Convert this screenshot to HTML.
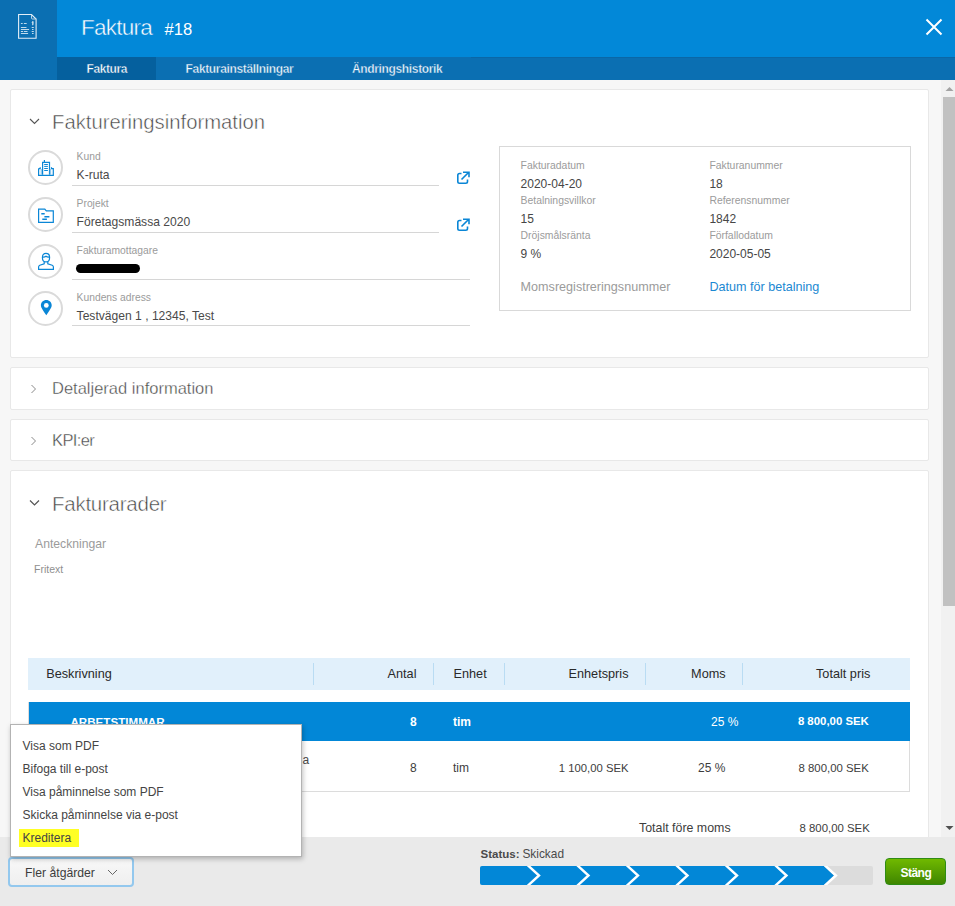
<!DOCTYPE html>
<html><head><meta charset="utf-8"><style>
*{margin:0;padding:0;box-sizing:border-box}
html,body{width:955px;height:906px;overflow:hidden;background:#f7f7f7;font-family:"Liberation Sans", sans-serif}
.a{position:absolute}
.t{position:absolute;line-height:1;white-space:nowrap}
.panel{position:absolute;left:10px;width:919px;background:#fff;border:1px solid #e8e8e8;border-radius:2px}
.circ{position:absolute;left:28px;width:35px;height:35px;border:2px solid #dadada;border-radius:50%;background:#fff}
.circ svg{position:absolute;left:-2px;top:-2px}
.ul{position:absolute;left:72px;height:1px;background:#d6d6d6}
</style></head><body>
<div class="a" style="left:0;top:0;width:57px;height:80px;background:#0b6fb2"></div>
<div class="a" style="left:57px;top:0;width:898px;height:57px;background:#0288d8"></div>
<div class="a" style="left:57px;top:57px;width:898px;height:23px;background:#0b6fb2"></div>
<div class="a" style="left:471px;top:57px;width:484px;height:1px;background:#0a67a6"></div>
<div class="a" style="left:57px;top:57px;width:99px;height:23px;background:#05609e"></div>
<svg class="a" style="left:10px;top:8px" width="36" height="36" viewBox="10 8 36 36">
<path d="M18.6 14.5 H31.5 L36.1 19 V38.3 H18.6 Z" fill="none" stroke="#e3eef7" stroke-width="1.1"/>
<path d="M31.5 14.8 V18 Q31.5 19 32.5 19 H35.8" fill="none" stroke="#b9d5ea" stroke-width="1"/>
<g stroke="#d5e6f3" stroke-width="0.9" fill="none">
<path d="M20.9 23.5h1.8M23.9 23.5h2.8M20.9 27.5h5.6M20.9 29.5h8.2M20.9 31.5h2.2M23.9 31.5h3.6M20.9 33.5h7.2M31.7 27.5h2.1M32 29.5h1.5M31.7 31.5h2.1M32 33.5h1.6"/>
<path d="M32.8 21.2v4M33.6 22.2c-1.2-0.6-1.9 0.1-1.1 0.8s1.2 1 0 1.7" stroke-width="1"/>
</g></svg>
<svg class="a" style="left:925px;top:18px" width="18" height="18" viewBox="0 0 18 18"><path d="M1.5 1.5L16.5 16.5M16.5 1.5L1.5 16.5" stroke="#fff" stroke-width="2"/></svg>
<div class="t" style="top:16.75px;font-size:22.5px;color:#fff;font-weight:300;letter-spacing:-0.75px;left:81px;-webkit-text-stroke:0.45px #0288d8;">Faktura</div>
<div class="t" style="top:21.85px;font-size:16.6px;color:#fff;left:164.5px;">#18</div>
<div class="t" style="top:62.84px;font-size:12px;color:#fff;font-weight:700;letter-spacing:-0.4px;left:86.5px;-webkit-text-stroke:0.35px #05609e;">Faktura</div>
<div class="t" style="top:62.84px;font-size:12px;color:#f2f8fc;font-weight:700;letter-spacing:-0.35px;left:185.6px;-webkit-text-stroke:0.35px #0b6fb2;">Fakturainställningar</div>
<div class="t" style="top:62.84px;font-size:12px;color:#f2f8fc;font-weight:700;letter-spacing:-0.35px;left:352px;-webkit-text-stroke:0.35px #0b6fb2;">Ändringshistorik</div>
<div class="a" style="left:941px;top:80px;width:14px;height:757px;background:#f1f1f1"></div>
<div class="a" style="left:943px;top:97px;width:12px;height:509px;background:#c1c1c1"></div>
<svg class="a" style="left:945px;top:86px" width="9" height="6"><path d="M0.5 5L4.5 1L8.5 5Z" fill="#a3a3a3"/></svg>
<svg class="a" style="left:945px;top:825px" width="9" height="6"><path d="M0.5 1L4.5 5L8.5 1Z" fill="#505050"/></svg>
<div class="panel" style="top:89px;height:269px"></div>
<svg class="a" style="left:29px;top:118px" width="11" height="8"><path d="M1 1L5.5 5.5L10 1" fill="none" stroke="#555" stroke-width="1.1"/></svg>
<div class="t" style="top:112.42px;font-size:20.3px;color:#444;left:52px;-webkit-text-stroke:0.5px #fff;">Faktureringsinformation</div>
<div class="circ" style="top:150px"><svg width="35" height="35" viewBox="0 0 35 35"><g fill="none" stroke="#0a86d6" stroke-width="1.2">
 <path d="M10.6 18.6V25.3H25.3V18.6H23.5V17.3M10.6 18.6H12.2V17.3"/><path d="M14.6 24.8V12.4H21.5V24.8"/><path d="M16.4 10V12.4"/>
 <path d="M16.2 14.5h3.7M16.2 16.4h3.7M16.2 18.5h3.7M16.2 20.5h3.7" stroke-width="1"/></g>
 <path d="M13.3 19V25M22.5 19V25" stroke="#8fc8ee" stroke-width="1.3"/></svg></div>
<div class="circ" style="top:197px"><svg width="35" height="35" viewBox="0 0 35 35"><g fill="none" stroke="#0a86d6" stroke-width="1.2">
 <path d="M10.6 12.2H16.8L18.3 13.9H25.3V25.3H10.6Z"/><path d="M13.3 16.8h3.4M16.4 19.8h5M14.3 22.3h4.6" stroke-width="1.5"/></g></svg></div>
<div class="circ" style="top:244px"><svg width="35" height="35" viewBox="0 0 35 35"><g fill="none" stroke="#0a86d6" stroke-width="1.2">
 <path d="M18 9.3C15.8 9.3 14.4 11 14.4 13.4C14.4 15.8 15.8 17.9 18 17.9C20.2 17.9 21.6 15.8 21.6 13.4C21.6 11 20.2 9.3 18 9.3Z"/>
 <path d="M14.5 13C16 13.3 17.2 12.9 18 12.2C18.8 12.9 20 13.3 21.5 13"/>
 <path d="M16.2 17.5V19.8L11.8 21.3C11 21.7 10.6 22.3 10.6 23V25.3H25.4V23C25.4 22.3 25 21.7 24.2 21.3L19.8 19.8V17.5"/></g></svg></div>
<div class="circ" style="top:291px"><svg width="35" height="35" viewBox="0 0 35 35"><path d="M18.3 9C15.3 9 12.9 11.3 12.9 14.3C12.9 16.6 14.2 18.3 18.3 24.2C22.4 18.3 23.7 16.6 23.7 14.3C23.7 11.3 21.3 9 18.3 9Z" fill="#0a86d6"/><circle cx="18.3" cy="14.4" r="2.4" fill="#fff"/></svg></div>
<div class="t" style="top:152.08px;font-size:10.3px;color:#9b9b9b;left:76.6px;">Kund</div>
<div class="t" style="top:168.76px;font-size:12.1px;color:#4a4a4a;left:76.6px;">K-ruta</div>
<div class="ul" style="top:185px;width:367px"></div>
<div class="t" style="top:199.08px;font-size:10.3px;color:#9b9b9b;left:76.6px;">Projekt</div>
<div class="t" style="top:215.76px;font-size:12.1px;color:#4a4a4a;left:76.6px;">Företagsmässa 2020</div>
<div class="ul" style="top:232px;width:367px"></div>
<div class="t" style="top:246.38px;font-size:10.3px;color:#9b9b9b;left:76.6px;">Fakturamottagare</div>
<div class="ul" style="top:279px;width:398px"></div>
<div class="t" style="top:293.08px;font-size:10.3px;color:#9b9b9b;left:76.6px;">Kundens adress</div>
<div class="t" style="top:309.76px;font-size:12.1px;color:#4a4a4a;left:76.6px;">Testvägen 1 , 12345, Test</div>
<div class="ul" style="top:325px;width:398px"></div>
<div class="a" style="left:76px;top:264px;width:64px;height:9px;border-radius:5px;background:#000"></div>
<svg class="a" style="left:456px;top:170px" width="15" height="15" viewBox="0 0 15 15"><g fill="none" stroke="#0a86d6" stroke-width="1.6">
    <path d="M5.5 3.5H3.5C2.4 3.5 1.8 4.1 1.8 5.2V11.5C1.8 12.6 2.4 13.2 3.5 13.2H9.8C10.9 13.2 11.5 12.6 11.5 11.5V9.5"/>
    <path d="M5.5 9.5L12.5 2.5M7 2.2H13V7.2"/></g></svg>
<svg class="a" style="left:456px;top:217px" width="15" height="15" viewBox="0 0 15 15"><g fill="none" stroke="#0a86d6" stroke-width="1.6">
    <path d="M5.5 3.5H3.5C2.4 3.5 1.8 4.1 1.8 5.2V11.5C1.8 12.6 2.4 13.2 3.5 13.2H9.8C10.9 13.2 11.5 12.6 11.5 11.5V9.5"/>
    <path d="M5.5 9.5L12.5 2.5M7 2.2H13V7.2"/></g></svg>
<div class="a" style="left:499px;top:146px;width:412px;height:165px;border:1px solid #d9d9d9;background:#fff"></div>
<div class="t" style="top:160.70px;font-size:10.4px;color:#9b9b9b;left:520.6px;">Fakturadatum</div>
<div class="t" style="top:178.24px;font-size:12px;color:#464646;left:520.6px;">2020-04-20</div>
<div class="t" style="top:195.70px;font-size:10.4px;color:#9b9b9b;left:520.6px;">Betalningsvillkor</div>
<div class="t" style="top:213.24px;font-size:12px;color:#464646;left:520.6px;">15</div>
<div class="t" style="top:230.70px;font-size:10.4px;color:#9b9b9b;left:520.6px;">Dröjsmålsränta</div>
<div class="t" style="top:248.24px;font-size:12px;color:#464646;left:520.6px;">9 %</div>
<div class="t" style="top:160.70px;font-size:10.4px;color:#9b9b9b;left:709.4px;">Fakturanummer</div>
<div class="t" style="top:178.24px;font-size:12px;color:#464646;left:709.4px;">18</div>
<div class="t" style="top:195.70px;font-size:10.4px;color:#9b9b9b;left:709.4px;">Referensnummer</div>
<div class="t" style="top:213.24px;font-size:12px;color:#464646;left:709.4px;">1842</div>
<div class="t" style="top:230.70px;font-size:10.4px;color:#9b9b9b;left:709.4px;">Förfallodatum</div>
<div class="t" style="top:248.24px;font-size:12px;color:#464646;left:709.4px;">2020-05-05</div>
<div class="t" style="top:281.33px;font-size:12.6px;color:#9b9b9b;left:520.6px;">Momsregistreringsnummer</div>
<div class="t" style="top:281.33px;font-size:12.6px;color:#1b88d2;left:709.4px;">Datum för betalning</div>
<div class="panel" style="top:367px;height:43px"></div>
<div class="panel" style="top:419px;height:42px"></div>
<svg class="a" style="left:30px;top:384px" width="7" height="10"><path d="M1.5 1L5.5 5L1.5 9" fill="none" stroke="#8a8a8a" stroke-width="1"/></svg>
<svg class="a" style="left:30px;top:436px" width="7" height="10"><path d="M1.5 1L5.5 5L1.5 9" fill="none" stroke="#8a8a8a" stroke-width="1"/></svg>
<div class="t" style="top:380.03px;font-size:16.5px;color:#444;left:52px;-webkit-text-stroke:0.35px #fff;">Detaljerad information</div>
<div class="t" style="top:432.03px;font-size:16.5px;color:#444;letter-spacing:-0.6px;left:52px;-webkit-text-stroke:0.35px #fff;">KPI:er</div>
<div class="panel" style="top:470px;height:500px"></div>
<svg class="a" style="left:29px;top:499px" width="11" height="8"><path d="M1 1.5L5.5 6L10 1.5" fill="none" stroke="#555" stroke-width="1.2"/></svg>
<div class="t" style="top:493.95px;font-size:20.5px;color:#444;letter-spacing:-0.25px;left:52px;-webkit-text-stroke:0.5px #fff;">Fakturarader</div>
<div class="t" style="top:537.67px;font-size:12.2px;color:#9b9b9b;left:35px;">Anteckningar</div>
<div class="t" style="top:564.11px;font-size:10.5px;color:#8f8f8f;left:34px;">Fritext</div>
<div class="a" style="left:28px;top:658px;width:882px;height:32px;background:#e1f0fb"></div>
<div class="a" style="left:313px;top:663px;width:1px;height:22px;background:#b9dcf3"></div>
<div class="a" style="left:433px;top:663px;width:1px;height:22px;background:#b9dcf3"></div>
<div class="a" style="left:504px;top:663px;width:1px;height:22px;background:#b9dcf3"></div>
<div class="a" style="left:645px;top:663px;width:1px;height:22px;background:#b9dcf3"></div>
<div class="a" style="left:742px;top:663px;width:1px;height:22px;background:#b9dcf3"></div>
<div class="t" style="top:667.55px;font-size:12.7px;color:#2a2a2a;left:46.2px;">Beskrivning</div>
<div class="t" style="top:667.55px;font-size:12.7px;color:#2a2a2a;right:538.5px;text-align:right;">Antal</div>
<div class="t" style="top:667.55px;font-size:12.7px;color:#2a2a2a;left:453.5px;">Enhet</div>
<div class="t" style="top:667.55px;font-size:12.7px;color:#2a2a2a;right:326.5px;text-align:right;">Enhetspris</div>
<div class="t" style="top:667.55px;font-size:12.7px;color:#2a2a2a;right:229.39999999999998px;text-align:right;">Moms</div>
<div class="t" style="top:667.55px;font-size:12.7px;color:#2a2a2a;right:84.70000000000005px;text-align:right;">Totalt pris</div>
<div class="a" style="left:28px;top:702px;width:882px;height:39px;background:#0287d7;border-left:1px solid #dcdcdc"></div>
<div class="t" style="top:716.18px;font-size:11.6px;color:#fff;font-weight:700;left:70.5px;">ARBETSTIMMAR</div>
<div class="t" style="top:715.84px;font-size:12px;color:#fff;font-weight:700;right:538.4px;text-align:right;">8</div>
<div class="t" style="top:715.84px;font-size:12px;color:#fff;font-weight:700;left:453px;">tim</div>
<div class="t" style="top:715.84px;font-size:12px;color:#fff;right:216.70000000000005px;text-align:right;">25 %</div>
<div class="t" style="top:716.35px;font-size:11.4px;color:#fff;font-weight:700;right:86.20000000000005px;text-align:right;">8 800,00 SEK</div>
<div class="a" style="left:28px;top:741px;width:882px;height:51px;background:#fff;border:1px solid #dcdcdc;border-top:none"></div>
<div class="t" style="top:754.44px;font-size:12px;color:#4a4a4a;left:302.5px;">a</div>
<div class="t" style="top:762.24px;font-size:12px;color:#3d3d3d;right:538.4px;text-align:right;">8</div>
<div class="t" style="top:762.24px;font-size:12px;color:#3d3d3d;left:453px;">tim</div>
<div class="t" style="top:762.83px;font-size:11.3px;color:#3d3d3d;right:326.5px;text-align:right;">1 100,00 SEK</div>
<div class="t" style="top:762.24px;font-size:12px;color:#3d3d3d;right:229.70000000000005px;text-align:right;">25 %</div>
<div class="t" style="top:762.75px;font-size:11.4px;color:#3d3d3d;right:86.20000000000005px;text-align:right;">8 800,00 SEK</div>
<div class="t" style="top:822.00px;font-size:12.4px;color:#3d3d3d;left:639px;">Totalt före moms</div>
<div class="t" style="top:822.85px;font-size:11.4px;color:#3d3d3d;right:85.20000000000005px;text-align:right;">8 800,00 SEK</div>
<div class="a" style="left:0;top:837px;width:955px;height:69px;background:#eaeaea"></div>
<div class="t" style="top:849.27px;font-size:11.5px;color:#4a4a4a;font-weight:700;left:480.5px;">Status:</div>
<div class="t" style="top:848.93px;font-size:11.9px;color:#4a4a4a;left:522.4px;">Skickad</div>
<div class="a" style="left:480px;top:866px;width:393px;height:19px;background:#dcdcdc;border-radius:2px"></div>
<svg class="a" style="left:480px;top:866px" width="393" height="19" viewBox="0 0 393 19"><path d="M2 0H344L354 9.5L344 19H2Q0 19 0 17V2Q0 0 2 0Z" fill="#0287d7"/><path d="M46.96 -1.5L59.00 9.5L46.96 20.5" fill="none" stroke="#fff" stroke-width="2.4"/><path d="M96.46 -1.5L108.50 9.5L96.46 20.5" fill="none" stroke="#fff" stroke-width="2.4"/><path d="M145.96 -1.5L158.00 9.5L145.96 20.5" fill="none" stroke="#fff" stroke-width="2.4"/><path d="M195.46 -1.5L207.50 9.5L195.46 20.5" fill="none" stroke="#fff" stroke-width="2.4"/><path d="M244.96 -1.5L257.00 9.5L244.96 20.5" fill="none" stroke="#fff" stroke-width="2.4"/><path d="M294.46 -1.5L306.50 9.5L294.46 20.5" fill="none" stroke="#fff" stroke-width="2.4"/><path d="M343.96 -1.5L356.00 9.5L343.96 20.5" fill="none" stroke="#fff" stroke-width="2.4"/></svg>
<div class="a" style="left:885px;top:858px;width:61px;height:27px;border:1px solid #2f8c14;border-radius:4px;background:linear-gradient(#70b900,#3f8600)"></div>
<div class="t" style="top:867.14px;font-size:12px;color:#fff;font-weight:700;letter-spacing:-0.5px;left:900.4px;">Stäng</div>
<div class="a" style="left:8px;top:857px;width:126px;height:30px;border:2px solid #93c8ee;border-radius:4px;background:linear-gradient(#f8f8f8,#efefef)"></div>
<div class="t" style="top:867.27px;font-size:12.2px;color:#3d3d3d;left:25.1px;">Fler åtgärder</div>
<svg class="a" style="left:107px;top:869px" width="11" height="7"><path d="M1 1L5.5 5.5L10 1" fill="none" stroke="#666" stroke-width="1"/></svg>
<div class="a" style="left:10px;top:724px;width:292px;height:133px;background:#fff;border:1px solid #b3b3b3;box-shadow:1px 2px 5px rgba(0,0,0,0.25)"></div>
<div class="a" style="left:19px;top:829px;width:60px;height:18px;background:#ffff24"></div>
<div class="t" style="top:740.14px;font-size:12px;color:#444;left:22.5px;">Visa som PDF</div>
<div class="t" style="top:763.14px;font-size:12px;color:#444;left:22.5px;">Bifoga till e-post</div>
<div class="t" style="top:786.14px;font-size:12px;color:#444;left:22.5px;">Visa påminnelse som PDF</div>
<div class="t" style="top:809.14px;font-size:12px;color:#444;left:22.5px;">Skicka påminnelse via e-post</div>
<div class="t" style="top:832.14px;font-size:12px;color:#444;left:22.5px;">Kreditera</div>
</body></html>
